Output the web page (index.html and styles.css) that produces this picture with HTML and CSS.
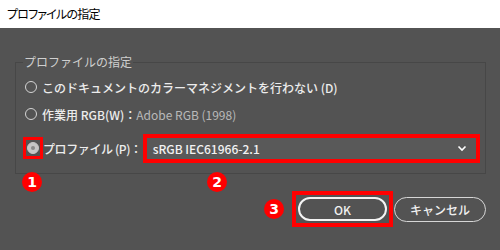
FILE: index.html
```html
<!DOCTYPE html>
<html lang="ja">
<head>
<meta charset="utf-8">
<link rel="stylesheet" href="styles.css">
</head>
<body>
<div class="window">
  <div class="titlebar">プロファイルの指定</div>
  <div class="content">
    <fieldset class="group">
      <legend>プロファイルの指定</legend>
      <div class="row row1">
        <span class="radio"></span>
        <span class="label">このドキュメントのカラーマネジメントを行わない (D)</span>
      </div>
      <div class="row row2">
        <span class="radio"></span>
        <span class="label">作業用 RGB(W)：<span class="muted">Adobe RGB (1998)</span></span>
      </div>
      <div class="row row3">
        <span class="radio-box"><span class="radio checked"></span></span>
        <span class="label">プロファイル (P)：</span>
        <div class="select">
          <span class="select-text">sRGB IEC61966-2.1</span>
          <svg class="chev" width="10" height="7" viewBox="0 0 10 7"><path d="M1.5 1.5 L5 5 L8.5 1.5" fill="none" stroke="#ffffff" stroke-width="1.6"/></svg>
        </div>
      </div>
      <span class="marker m1">1</span>
      <span class="marker m2">2</span>
    </fieldset>
    <div class="buttons">
      <span class="marker m3">3</span>
      <div class="ok-box"><button class="btn ok">OK</button></div>
      <button class="btn cancel">キャンセル</button>
    </div>
  </div>
</div>
</body>
</html>
```

FILE: styles.css
```css
* { box-sizing: border-box; }
html, body { margin: 0; padding: 0; }
body {
  width: 500px;
  height: 250px;
  overflow: hidden;
  background: #535353;
  font-family: "Noto Sans CJK JP", "Noto Sans", sans-serif;
}
.window { width: 500px; height: 250px; display: flex; flex-direction: column; }
.titlebar {
  height: 28px;
  background: #ffffff;
  color: #000000;
  font-size: 12px;
  line-height: 27px;
  padding-left: 7px;
  font-feature-settings: "palt";
  letter-spacing: -0.8px;
}
.content {
  flex: 1;
  background: #535353;
  padding: 0 14px 0 15px;
}
.group {
  position: relative;
  margin: 26px 0 0 0;
  border: 1px solid #474747;
  padding: 5px 5px 10px 7px;
  min-width: 0;
}
.group legend {
  color: #cfcfcf;
  font-size: 12px;
  line-height: 16px;
  padding: 0 1px;
  margin-left: 0;
}
.row {
  display: flex;
  align-items: center;
  color: #ececec;
  font-size: 12px;
  font-weight: 500;
}
.row1 { height: 24px; }
.row2 { height: 24px; margin-top: 3px; }
.row3 { height: 30px; margin-top: 7px; }
.radio {
  width: 12px;
  height: 12px;
  border: 1.5px solid #d4d4d4;
  border-radius: 50%;
  margin: 0 5px 0 2px;
  flex: none;
}
.radio-box {
  width: 20px;
  height: 22px;
  border: 3px solid #ff0000;
  display: flex;
  align-items: center;
  justify-content: center;
  flex: none;
}
.radio.checked {
  margin: 0;
  background: #c6c6c6;
  border-color: #c6c6c6;
  display: flex;
  align-items: center;
  justify-content: center;
}
.radio.checked::after {
  content: "";
  width: 4px;
  height: 4px;
  border-radius: 50%;
  background: #8a8a8a;
}
.row3 .label { letter-spacing: -0.4px; }
.muted { color: #b9b9b9; font-weight: 400; }
.select {
  flex: 1;
  height: 29px;
  margin-left: 1px;
  border: 4px solid #ff0000;
  background: #595959;
  display: flex;
  align-items: center;
  justify-content: space-between;
  padding: 0 9px 0 6px;
}
.select-text { color: #f2f2f2; font-size: 12px; font-weight: 500; }
.chev { display: block; }
.marker {
  position: absolute;
  width: 20px;
  height: 20px;
  border-radius: 50%;
  background: #ff0000;
  color: #ffffff;
  font-family: "DejaVu Sans", sans-serif;
  font-weight: bold;
  font-size: 14px;
  line-height: 20px;
  text-align: center;
}
.m1 { left: 6px; top: 102px; }
.m2 { left: 191px; top: 102px; }
.buttons {
  display: flex;
  justify-content: flex-end;
  align-items: center;
  margin-top: 17px;
  gap: 1px;
}
.buttons .m3 { position: static; margin-right: 7px; }
.ok-box {
  border: 4px solid #ff0000;
  padding: 2px;
  height: 36px;
  width: 101px;
  display: flex;
}
.btn {
  font-family: "Noto Sans CJK JP", "Noto Sans", sans-serif;
  font-size: 12px;
  font-weight: 500;
  color: #f0f0f0;
  background: #535353;
  border-radius: 13px;
  padding: 0;
}
.ok {
  width: 100%;
  height: 24px;
  border: 2px solid #f4f4f4;
}
.cancel {
  width: 92px;
  height: 25px;
  border: 1px solid #d6d6d6;
}
```
